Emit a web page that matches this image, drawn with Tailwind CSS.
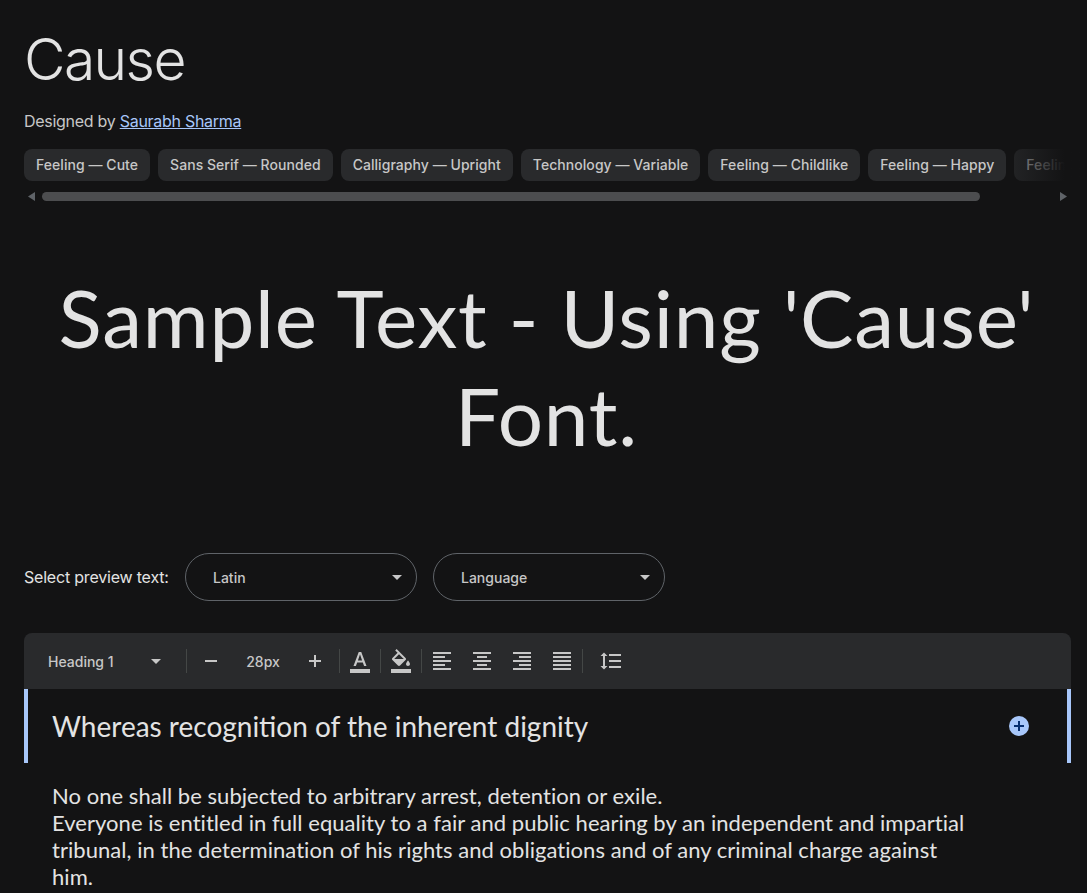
<!DOCTYPE html>
<html lang="en">

<head>
  <meta charset="UTF-8">
  <meta name="viewport" content="width=device-width, initial-scale=1.0">
  <title>Cause</title>
  <script src="https://cdn.jsdelivr.net/npm/@tailwindcss/browser@4"></script>
</head>

<body class="bg-[#131314] text-[#e3e3e3] font-['Inter',sans-serif] h-[893px] overflow-hidden">
  <div class="pt-[26px] px-6 pr-4">
    <!-- Title -->
    <h1 class="text-[57px] leading-[68px] font-[350] tracking-[-1.6px]">Cause</h1>
    <p class="mt-[15px] text-[16px] leading-[24px] text-[#c7c7c7] tracking-[-0.28px]">Designed by <a href="#" class="text-[#a8c7fa] underline">Saurabh Sharma</a></p>
  </div>

  <!-- Tags -->
  <div class="relative mt-[16px] pl-6 overflow-hidden">
    <div class="flex gap-2 text-[14px] font-medium text-[#c7c7c7] tracking-[0.05px]">
      <span class="h-8 leading-8 px-3 rounded-lg bg-[#292a2c]">Feeling — Cute</span>
      <span class="h-8 leading-8 px-3 rounded-lg bg-[#292a2c]">Sans Serif — Rounded</span>
      <span class="h-8 leading-8 px-3 rounded-lg bg-[#292a2c]">Calligraphy — Upright</span>
      <span class="h-8 leading-8 px-3 rounded-lg bg-[#292a2c]">Technology — Variable</span>
      <span class="h-8 leading-8 px-3 rounded-lg bg-[#292a2c]">Feeling — Childlike</span>
      <span class="h-8 leading-8 px-3 rounded-lg bg-[#292a2c]">Feeling — Happy</span>
      <span class="h-8 leading-8 px-3 rounded-lg bg-[#292a2c] whitespace-nowrap">Feeling</span>
    </div>
    <div class="absolute top-0 right-0 h-8 w-[74px] bg-gradient-to-r from-[#131314]/30 to-[#131314] to-[70%]"></div>
  </div>
  <div class="flex items-center h-[9px] mt-[11px] pl-[28px] pr-[20px]">
    <svg class="w-2 h-[9px] text-[#5f6368]" viewBox="0 0 8 9" fill="currentColor"><path d="M7 0v9L0 4.500z" /></svg>
    <div class="ml-[6px] w-[938px] h-[9px] rounded-full bg-[#4c4d4f]"></div>
    <svg class="ml-auto w-2 h-[9px] text-[#5f6368]" viewBox="0 0 8 9" fill="currentColor"><path d="M1 0v9l7-4.500z" /></svg>
  </div>

  <!-- Sample text -->
  <div class="mt-[67px] h-[200px] pl-[30px] pr-6 text-center text-[80px] leading-[98px] text-[#e3e3e3] font-['Lato',sans-serif] font-normal tracking-[0.8px]">
    Sample Text - Using 'Cause' Font.
  </div>

  <!-- Preview selects -->
  <div class="mt-[85px] flex items-center pl-6">
    <span class="w-[161px] text-[16px] text-[#e3e3e3] tracking-[-0.2px]">Select preview text:</span>
    <div class="flex gap-4">
      <div class="w-[232px] h-12 flex items-center justify-between pl-[27px] pr-[14px] rounded-full border border-[#5f6368] text-[14px] font-medium text-[#c7c7c7]">
        Latin
        <svg class="w-[10px] h-[5px] text-[#c7c7c7]" viewBox="0 0 10 5" fill="currentColor"><path d="M0 0h10L5 5z" /></svg>
      </div>
      <div class="w-[232px] h-12 flex items-center justify-between pl-[27px] pr-[14px] rounded-full border border-[#5f6368] text-[14px] font-medium text-[#c7c7c7]">
        Language
        <svg class="w-[10px] h-[5px] text-[#c7c7c7]" viewBox="0 0 10 5" fill="currentColor"><path d="M0 0h10L5 5z" /></svg>
      </div>
    </div>
  </div>

  <!-- Type tester -->
  <div class="mt-8 mx-6 mr-4">
    <div class="h-14 flex items-center bg-[#292a2c] rounded-t-lg text-[14px] font-medium text-[#c7c7c7]">
      <span class="ml-6 w-[103px]">Heading 1</span>
      <svg class="w-[10px] h-[5px]" viewBox="0 0 10 5" fill="currentColor"><path d="M0 0h10L5 5z" /></svg>
      <div class="ml-[25px] w-px h-6 bg-[#444746]"></div>
      <svg class="ml-[12px] w-6 h-6" viewBox="0 0 24 24" fill="currentColor"><path d="M6 11h12v2H6z" /></svg>
      <span class="w-[80px] text-center">28px</span>
      <svg class="w-6 h-6" viewBox="0 0 24 24" fill="currentColor"><path d="M18 13h-5v5h-2v-5H6v-2h5V6h2v5h5z" /></svg>
      <div class="ml-[12px] w-px h-6 bg-[#444746]"></div>
      <svg class="ml-[8px] w-6 h-6" viewBox="0 0 24 24" fill="currentColor"><path d="M2 20h20v4H2v-4zm3.490-3h2.420l1.270-3.580h5.650L16.090 17h2.420L13.250 3h-2.500L5.490 17zm4.420-5.610 2.030-5.790h.12l2.030 5.790H9.910z" /></svg>
      <div class="ml-[8px] w-px h-6 bg-[#444746]"></div>
      <svg class="ml-[8px] w-6 h-6" viewBox="0 0 24 24" fill="currentColor"><path d="M16.560 8.940L7.620 0 6.210 1.410l2.380 2.380-5.150 5.150c-.59.59-.59 1.540 0 2.120l5.500 5.500c.29.29.68.44 1.060.44s.77-.15 1.060-.44l5.500-5.500c.59-.58.59-1.530 0-2.120zM5.210 10L10 5.210 14.790 10H5.210zM19 11.500s-2 2.170-2 3.500c0 1.100.9 2 2 2s2-.9 2-2c0-1.330-2-3.500-2-3.500zM2 20h20v4H2v-4z" /></svg>
      <div class="ml-[8px] w-px h-6 bg-[#444746]"></div>
      <svg class="ml-[8px] w-6 h-6" viewBox="0 0 24 24" fill="currentColor"><path d="M15 15H3v2h12v-2zm0-8H3v2h12V7zM3 13h18v-2H3v2zm0 8h18v-2H3v2zM3 3v2h18V3H3z" /></svg>
      <svg class="ml-4 w-6 h-6" viewBox="0 0 24 24" fill="currentColor"><path d="M7 15v2h10v-2H7zm-4 6h18v-2H3v2zm0-8h18v-2H3v2zm4-6v2h10V7H7zM3 3v2h18V3H3z" /></svg>
      <svg class="ml-4 w-6 h-6" viewBox="0 0 24 24" fill="currentColor"><path d="M3 21h18v-2H3v2zm6-4h12v-2H9v2zm-6-4h18v-2H3v2zm6-4h12V7H9v2zM3 3v2h18V3H3z" /></svg>
      <svg class="ml-4 w-6 h-6" viewBox="0 0 24 24" fill="currentColor"><path d="M3 21h18v-2H3v2zm0-4h18v-2H3v2zm0-4h18v-2H3v2zm0-4h18V7H3v2zm0-6v2h18V3H3z" /></svg>
      <div class="ml-2 w-px h-6 bg-[#444746]"></div>
      <svg class="ml-4 w-6 h-6" viewBox="0 0 24 24" fill="currentColor"><path d="M6 7h2.500L5 3.500 1.500 7H4v10H1.500L5 20.500 8.500 17H6V7zm4-2v2h12V5H10zm0 14h12v-2H10v2zm0-6h12v-2H10v2z" /></svg>
    </div>

    <div class="h-[74px] flex items-center justify-between border-x-4 border-[#a8c7fa] pl-6 pr-[36px]">
      <span class="text-[28px] text-[#e3e3e3] font-['Lato',sans-serif]">Whereas recognition of the inherent dignity</span>
      <svg class="w-6 h-6" viewBox="0 0 24 24"><circle cx="12" cy="12" r="10" fill="#a8c7fa" /><path d="M11 7h2v4h4v2h-4v4h-2v-4H7v-2h4z" fill="#062e6f" /></svg>
    </div>

    <p class="mt-[19px] ml-7 whitespace-nowrap text-[22px] leading-[27px] text-[#e3e3e3] font-['Lato',sans-serif] tracking-[0.04px]">
      No one shall be subjected to arbitrary arrest, detention or exile.<br>
      Everyone is entitled in full equality to a fair and public hearing by an independent and impartial<br>
      tribunal, in the determination of his rights and obligations and of any criminal charge against<br>
      him.
    </p>
  </div>
</body>

</html>
